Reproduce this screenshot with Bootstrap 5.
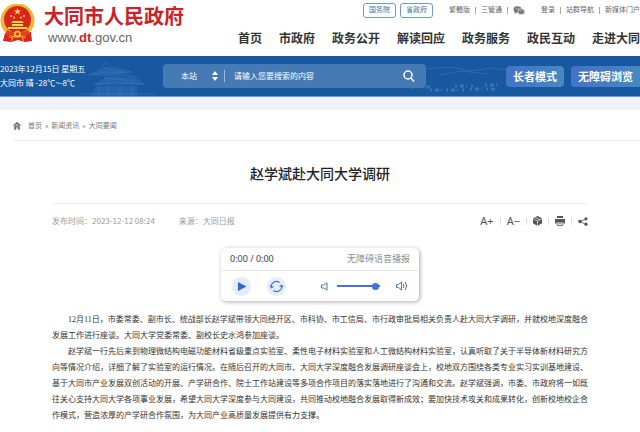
<!DOCTYPE html>
<html lang="zh-CN">
<head>
<meta charset="utf-8">
<meta name="viewport" content="width=device-width, initial-scale=1">
<title>赵学斌赴大同大学调研</title>
<link href="https://cdn.jsdelivr.net/npm/bootstrap@5.3.0/dist/css/bootstrap.min.css" rel="stylesheet">
<style>
body{font-family:"Noto Sans CJK SC",sans-serif;font-size:8px;line-height:16px;color:#333;background:#fff;overflow-x:hidden}
a{color:inherit;text-decoration:none}
.site-head{padding-bottom:6px}
.brand{width:238px;height:50px;padding-top:1px}
.brand svg{margin-top:3px}
.brand-name{font-size:20px;line-height:29px;font-weight:700;color:#cb2128;white-space:nowrap}
.brand-url{font-family:"Liberation Sans",sans-serif;font-size:13px;line-height:15px;color:#666;padding-left:4px}
.brand-url b{color:#cb2128}
.head-right{min-width:0;overflow:hidden;white-space:nowrap}
.top-links{height:18px;padding:3px 0 0 125px;font-size:7px;line-height:12px;color:#666}
.link-set{gap:5px}
.link-set:nth-of-type(1){padding-left:12px}
.gov-tag{border:1px solid #6f9bc8;border-radius:3px;color:#3b6ea5;padding:0 5px;line-height:10px;margin-right:4px}
.vr{opacity:1;background:#aaa;height:7px;align-self:center;min-height:0}
.main-nav{gap:17px;font-size:12px;line-height:20px;font-weight:700;color:#333;margin-top:10px}
.banner{background:#17589f;height:41px;position:relative;overflow:hidden;border-bottom:1px solid #6f9ccc}
.banner-art{position:absolute;inset:0;width:640px;height:41px}
.banner-row{position:relative;height:40px}
.weather{width:163px;color:#fff;line-height:14px;white-space:nowrap}
.search-box{width:263px;height:24px;background:#457ab5;border-radius:4px;padding:0 8px 0 18px}
.search-box select,.search-box input{background:transparent;border:0;color:#fff;font-size:8px;line-height:16px;padding:0;outline:0;appearance:none}
.search-box select{width:31px}
.search-box input::placeholder{color:#fff;opacity:1}
.search-box .vr{height:12px;background:#9dbbdb;margin:0 9px 0 6px}
.plain{background:none;border:0;padding:0;line-height:0;color:inherit}
.modes{gap:7px}
.mode-btn{height:21px;border:0;border-radius:4px;padding:0 7px;background:linear-gradient(90deg,#4472c8,#4688c0);color:#fff;font-size:11px;line-height:20px;font-weight:700;white-space:nowrap}
.strip{height:13px;background:#f1f3f6}
.crumbs{margin-left:13px;height:31px;border-bottom:1px solid #eee;color:#777;font-size:7px;gap:3px}
.crumbs svg{margin-right:4px}
.article{padding:0 52px}
.headline{font-size:14px;line-height:20px;font-weight:500;color:#222;margin:0;padding:22px 0 20px;border-bottom:1px solid #eee}
.meta{height:34px;color:#999}
.tools{gap:6px;color:#555;font-size:11px;font-family:"Noto Sans",sans-serif}
.tools .vr{background:#ddd}
.player{width:198px;margin:10px auto 0;border-radius:5px;background:#fff;box-shadow:1px 1px 4px #aaa}
.player-top{height:23px;border-bottom:1px solid #e8e8e8;padding:0 9px;font-size:9px}
.clock{font-family:"Noto Sans",sans-serif;color:#444}
.player-bottom{height:30px;padding:0 11px}
.round-btn{width:19px;height:19px;border-radius:50%;background:#e5edfb}
.volume{appearance:none;width:43px;height:7px;background:linear-gradient(#3f74d8,#3f74d8) center/100% 2px no-repeat;margin:0 16px 0 9px}
.volume::-webkit-slider-thumb{appearance:none;width:7px;height:7px;border-radius:50%;background:#3f74d8}
.story{padding-top:11px;text-align:justify;font-family:"Liberation Serif","Noto Sans CJK SC",serif}
.story p{margin:0;text-indent:2em}
</style>
</head>
<body>
<header class="site-head d-flex">
  <a href="#" class="brand d-flex flex-shrink-0">
    <svg width="36" height="40" viewBox="0 0 36 40" aria-hidden="true">
      <path d="M5 29L3 37l8 1 7-2 7 2 7-1-1-9z" fill="#d3271f"/>
      <circle cx="17.500" cy="16.500" r="17" fill="#f2b632"/>
      <circle cx="17.500" cy="15.500" r="13.500" fill="#d9261c"/>
      <path d="M17.500 4l1 2.500h2.500l-2 1.600.8 2.500-2.300-1.500-2.300 1.500.8-2.500-2-1.600h2.500z" fill="#ffd84a"/>
      <g fill="#ffd84a"><circle cx="11" cy="12" r="1"/><circle cx="14" cy="13.500" r="1"/><circle cx="21" cy="13.500" r="1"/><circle cx="24" cy="12" r="1"/>
      <path d="M11 19l2-2h9l2 2zM12 20h11v2H12zM8 23h19v2H8z"/></g>
      <path d="M7 26q10 6 21 0l2 5-8 1q-4-3-9 0l-8-1z" fill="#e83a22"/>
      <circle cx="17.500" cy="30" r="3.500" fill="#f2b632"/><circle cx="17.500" cy="30" r="1.500" fill="#d3271f"/>
      <path d="M9 33l4 1-2 3M26 33l-4 1 2 3" stroke="#f2b632" fill="none"/>
    </svg>
    <span class="ps-2"><span class="brand-name d-block">大同市人民政府</span><span class="brand-url d-block">www.<b>dt</b>.gov.cn</span></span>
  </a>
  <div class="head-right flex-fill">
    <div class="top-links d-flex">
      <a href="#" class="gov-tag">国务院</a><a href="#" class="gov-tag">省政府</a>
      <div class="link-set d-flex"><a href="#">繁體版</a><span class="vr"></span><a href="#">三管通</a><span class="vr"></span>
      <a href="#" aria-label="微信"><svg width="12" height="9" viewBox="0 0 12 9"><ellipse cx="4.500" cy="3.500" rx="4" ry="3.300" fill="#777"/><path d="M2 5.500L1.500 8 4 6.500z" fill="#777"/><ellipse cx="8.300" cy="5.700" rx="3.500" ry="2.900" fill="#777" stroke="#fff" stroke-width=".6"/><g fill="#fff"><circle cx="3" cy="2.700" r=".5"/><circle cx="5.500" cy="2.700" r=".5"/><circle cx="7.200" cy="5" r=".4"/><circle cx="9.300" cy="5" r=".4"/></g></svg></a></div>
      <div class="link-set d-flex ps-3"><a href="#">登录</a><span class="vr"></span><a href="#">站群导航</a><span class="vr"></span><a href="#">新媒体门户</a></div>
    </div>
    <nav class="main-nav d-flex"><a href="#">首页</a><a href="#">市政府</a><a href="#">政务公开</a><a href="#">解读回应</a><a href="#">政务服务</a><a href="#">政民互动</a><a href="#">走进大同</a></nav>
  </div>
</header>

<div class="banner">
  <svg class="banner-art" viewBox="0 0 640 41" aria-hidden="true">
    <g fill="none" stroke="#4d86c5" opacity=".4">
      <path d="M89 19q10-2 17-13l5 5 20 5q-18 1-27 0-8 3-15 3zM94 29q10-4 14-11l25 2 11 8q-25-3-50 1zM99 30v10M108 29v11M120 29v11M132 29v11M105 12l18 4M104 22l30 3M80 38h75"/>
      <path d="M426 13l25-2 20 4 20-3 16 2M440 19l22-4 25 3"/>
    </g>
    <path d="M91 19l15-8 26 6-28 3zM95 29l13-9 25 1 11 8zM97 30h40v10H90z" fill="#3a76b8" opacity=".4"/>
    <path d="M405 31h25M430 34h35M470 33h25M455 30h18M485 29h12" stroke="#6b9ed3" stroke-width="3" stroke-dasharray="2 3 4 2 1 4" opacity=".4"/>
  </svg>
  <div class="banner-row d-flex align-items-center">
    <div class="weather flex-shrink-0">2023年12月15日 星期五<br>大同市 晴 -28℃~-8℃</div>
    <form class="search-box d-flex align-items-center flex-shrink-0" onsubmit="return false">
      <select aria-label="搜索范围"><option>本站</option></select>
      <svg width="6" height="10" viewBox="0 0 6 10" class="flex-shrink-0" aria-hidden="true"><path d="M3 0l3 4H0zM3 10l3-4H0z" fill="#fff"/></svg>
      <span class="vr"></span>
      <input type="text" class="flex-fill" placeholder="请输入您要搜索的内容" aria-label="搜索内容">
      <button class="plain text-white" aria-label="搜索"><svg width="18" height="12" viewBox="0 0 18 12" fill="none" stroke="#fff" stroke-width="1.500"><circle cx="8" cy="5" r="4"/><path d="M11 8l3 3.500"/></svg></button>
    </form>
    <div class="modes d-flex ms-auto"><button class="mode-btn">长者模式</button><button class="mode-btn rounded-end-0">无障碍浏览</button></div>
  </div>
</div>
<div class="strip"></div>

<nav class="crumbs d-flex align-items-center" aria-label="路径">
  <svg width="8" height="9" viewBox="0 0 8 9" aria-hidden="true"><path d="M0 4.500L4 1l4 3.500M1.500 5v3.500H3V6h2v2.500h1.500V5L4 3z" fill="#777" stroke="#777" stroke-width=".6"/></svg>
  <a href="#">首页</a><span>»</span><a href="#">新闻资讯</a><span>»</span><a href="#">大同要闻</a>
</nav>

<main class="article">
  <h1 class="headline text-center">赵学斌赴大同大学调研</h1>
  <div class="meta d-flex align-items-center">
    <span>发布时间：2023-12-12 08:24</span><span class="ms-4">来源：大同日报</span>
    <div class="tools d-flex align-items-center ms-auto">
      <button class="plain">A+</button><span class="vr"></span><button class="plain">A−</button><span class="vr"></span>
      <button class="plain" aria-label="收藏"><svg width="9" height="10" viewBox="0 0 9 10"><path d="M4.500 0L9 2.300v5L4.500 10 0 7.300v-5z" fill="#555"/><path d="M0 2.500l4.500 2.400L9 2.500M4.500 5v5M2.200 1.300l4.500 2.300" stroke="#fff" stroke-width=".7" fill="none"/></svg></button><span class="vr"></span>
      <button class="plain" aria-label="打印"><svg width="10" height="10" viewBox="0 0 10 10"><path d="M2 0h6v2H2zM0 3h10v4.500H8.500V6h-7v1.500H0z" fill="#555"/><path d="M2.200 6.200h5.600v3.300H2.200zM3.500 7.800h3" stroke="#555" stroke-width=".8" fill="none"/></svg></button><span class="vr"></span>
      <button class="plain" aria-label="分享"><svg width="10" height="9" viewBox="0 0 10 9"><path d="M8 2L2 4.500 8 7.500" stroke="#555" stroke-width=".8" fill="none"/><g fill="#555"><circle cx="2" cy="4.500" r="1.800"/><circle cx="8" cy="1.800" r="1.600"/><circle cx="8" cy="7.200" r="1.600"/></g></svg></button>
    </div>
  </div>

  <section class="player" aria-label="语音播报">
    <div class="player-top d-flex align-items-center justify-content-between"><span class="clock">0:00 / 0:00</span><span class="text-black-50">无障碍语音播报</span></div>
    <div class="player-bottom d-flex align-items-center">
      <button class="plain round-btn" aria-label="播放"><svg width="19" height="19" viewBox="0 0 19 19"><path d="M6 5l8.500 4.500L6 14z" fill="#3668d0"/></svg></button>
      <button class="plain round-btn ms-3 me-auto" aria-label="循环"><svg width="19" height="19" viewBox="0 0 19 19" fill="none" stroke="#4a74c9" stroke-width="1.200"><path d="M4.500 10.500a5 5 0 0 1 8-5M14.500 8.500a5 5 0 0 1-8 5M3 8.700l1.500 2L6.500 9.500M12.700 9.500l1.800-1.200L16 10"/></svg></button>
      <svg width="7" height="9" viewBox="0 0 7 9" fill="none" stroke="#4a74c9" aria-hidden="true"><path d="M.5 3h2.200L6 .8v7.400L2.700 6H.5z"/></svg>
      <input class="volume" type="range" aria-label="音量" min="0" max="100" value="97">
      <svg width="12" height="10" viewBox="0 0 12 10" fill="none" stroke="#4a74c9" aria-hidden="true"><path d="M.5 3.500h2L5.500 1v8L2.500 6.500h-2zM7.300 3q1.500 2 0 4M9.200 1q3 4 0 8"/></svg>
    </div>
  </section>

  <article class="story">
    <p>12月11日，市委常委、副市长、统战部长赵学斌带领大同经开区、市科协、市工信局、市行政审批局相关负责人赴大同大学调研，并就校地深度融合发展工作进行座谈。大同大学党委常委、副校长史水鸿参加座谈。</p>
    <p>赵学斌一行先后来到物理微结构电磁功能材料省级重点实验室、柔性电子材料实验室和人工微结构材料实验室，认真听取了关于半导体新材料研究方向等情况介绍，详细了解了实验室的运行情况。在随后召开的大同市、大同大学深度融合发展调研座谈会上，校地双方围绕各类专业实习实训基地建设、基于大同市产业发展双创活动的开展、产学研合作、院士工作站建设等多项合作项目的落实落地进行了沟通和交流。赵学斌强调，市委、市政府将一如既往关心支持大同大学各项事业发展，希望大同大学深度参与大同建设，共同推动校地融合发展取得新成效；要加快技术攻关和成果转化，创新校地校企合作模式，营造浓厚的产学研合作氛围，为大同产业高质量发展提供有力支撑。</p>
  </article>
</main>
<script src="https://cdn.jsdelivr.net/npm/bootstrap@5.3.0/dist/js/bootstrap.bundle.min.js"></script>
</body>
</html>
